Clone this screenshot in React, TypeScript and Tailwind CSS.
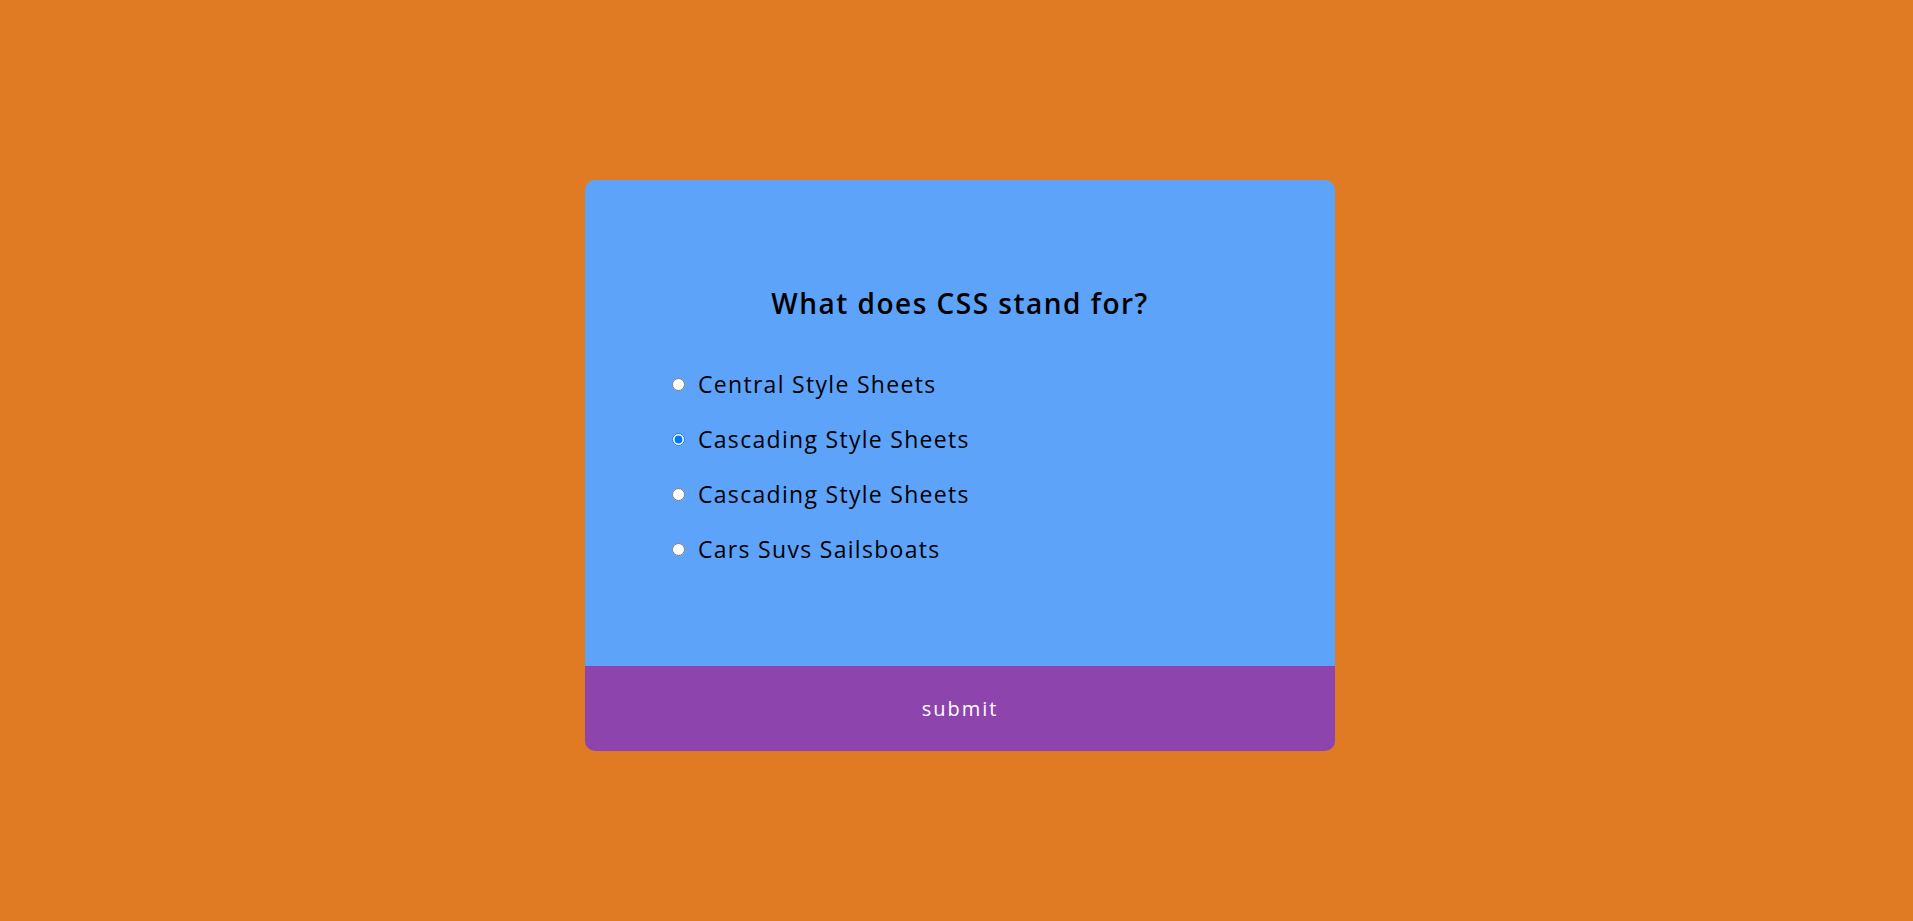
import React from "react";

const options = [
    { id: "a", text: "Central Style Sheets" },
    { id: "b", text: "Cascading Style Sheets" },
    { id: "c", text: "Cascading Style Sheets" },
    { id: "d", text: "Cars Suvs Sailsboats" },
];

const App: React.FC = () => {
    return (
        <div
            className="flex min-h-screen items-center justify-center bg-[#e07b24] pl-[7px] pt-[10px]"
            style={{ fontFamily: '"Open Sans", "Liberation Sans", sans-serif' }}
        >
            <div className="w-[750px] overflow-hidden rounded-[10px]">
                <div className="h-[486px] bg-[#5ca3f9] pt-[103px]">
                    <h2 className="text-center text-[28px] font-semibold leading-[40px] tracking-[1.5px] text-black">
                        What does CSS stand for?
                    </h2>
                    <ul className="mt-[47px] flex flex-col gap-[27px] pl-[87px]">
                        {options.map((o) => (
                            <li key={o.id} className="flex h-[28px] items-center">
                                <input
                                    type="radio"
                                    name="answer"
                                    id={o.id}
                                    defaultChecked={o.id === "b"}
                                    className="m-0 h-[13px] w-[13px]"
                                />
                                <label
                                    htmlFor={o.id}
                                    className="ml-[13px] text-[23px] leading-[28px] tracking-[1.3px] text-black"
                                >
                                    {o.text}
                                </label>
                            </li>
                        ))}
                    </ul>
                </div>
                <button className="flex h-[85px] w-full items-center justify-center bg-[#8e44ad] text-[20px] tracking-[2px] text-white">
                    submit
                </button>
            </div>
        </div>
    );
};

export default App;
